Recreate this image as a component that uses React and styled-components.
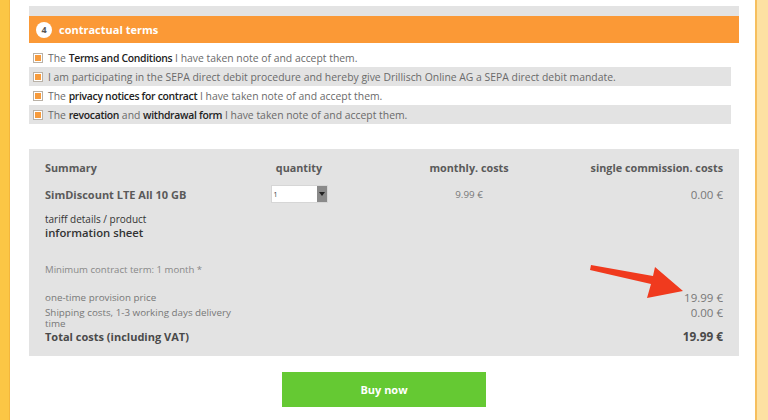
import styled, { createGlobalStyle } from 'styled-components';

const GlobalStyle = createGlobalStyle`
  html, body {
    margin: 0;
    padding: 0;
    background: #fff;
  }
  body {
    font-family: "Open Sans", "DejaVu Sans", sans-serif;
    color: #666;
  }
`;

const Page = styled.div`
  display: flex;
  width: 768px;
  height: 420px;
  overflow: hidden;
`;

const LeftRail = styled.div`
  width: 9px;
  background: #fbc645;
  border-right: 1px solid #f3b63c;
`;

const RightRail = styled.div`
  width: 11px;
  background: #fde1a2;
  border-left: 2px solid #f6bf5e;
`;

const Main = styled.div`
  flex: 1;
  padding: 6px 16px 0 19px;
`;

const TopBar = styled.div`
  height: 10px;
  background: #e3e3e3;
`;

const SectionHeader = styled.div`
  display: flex;
  align-items: center;
  gap: 7px;
  height: 27px;
  padding-left: 7px;
  background: #fb9936;
  color: #fff;
  font-size: 11px;
  font-weight: 700;
`;

const StepBadge = styled.span`
  display: flex;
  align-items: center;
  justify-content: center;
  width: 16px;
  height: 16px;
  border-radius: 50%;
  background: #fff;
  color: #555;
  font-size: 9px;
  font-weight: 700;
`;

const Terms = styled.div`
  margin-top: 5px;
  width: 702px;
`;

const TermRow = styled.label`
  display: flex;
  align-items: center;
  gap: 5px;
  height: 19px;
  padding-left: 4px;
  font-size: 10.4px;
  color: #6a6a6a;
  background: ${(props) => (props.shaded ? '#e3e3e3' : 'transparent')};
`;

const CheckBox = styled.span`
  box-sizing: border-box;
  width: 10px;
  height: 10px;
  border: 1px solid #b9b1a6;
  background: #fff;
  padding: 1px;
  display: flex;

  &::after {
    content: '';
    flex: 1;
    background: #f79b3c;
  }
`;

const Strong = styled.b`
  font-weight: 600;
  color: #222;
  letter-spacing: -0.3px;
`;

const Summary = styled.div`
  margin-top: 25px;
  background: #e3e3e3;
  padding: 11px 16px 14px 16px;
  font-size: 9.8px;
`;

const SummaryGrid = styled.div`
  display: grid;
  grid-template-columns: 184px 140px 200px 1fr;
  align-items: center;
  row-gap: 10px;
`;

const HeadCell = styled.div`
  font-weight: 700;
  font-size: 10.8px;
  color: #5a5a5a;
  text-align: ${(props) => props.align || 'left'};
`;

const Cell = styled.div`
  text-align: ${(props) => props.align || 'left'};
  color: #777;
  font-size: ${(props) => (props.big ? '11.5px' : '9.8px')};
`;

const ProductName = styled.div`
  font-weight: 700;
  font-size: 11px;
  color: #5a5a5a;
`;

const Select = styled.div`
  margin: 0 auto;
  display: flex;
  width: 57px;
  height: 18px;
  background: #fff;
  border: 1px solid #d6d6d6;
  box-sizing: border-box;
  font-size: 7px;
  color: #333;
`;

const SelectValue = styled.span`
  flex: 1;
  display: flex;
  align-items: center;
  padding-left: 2px;
`;

const SelectArrow = styled.span`
  width: 10px;
  background: #8a8a8a;
  display: flex;
  align-items: center;
  justify-content: center;

  &::after {
    content: '';
    border-left: 3px solid transparent;
    border-right: 3px solid transparent;
    border-top: 4px solid #222;
  }
`;

const Tariff = styled.div`
  margin-top: 10px;
  line-height: 13px;
  color: #333;
`;

const TariffTop = styled.div`
  font-size: 10px;
`;

const TariffBottom = styled.div`
  font-size: 11.3px;
  font-weight: 600;
`;

const MinTerm = styled.div`
  margin-top: 24px;
  color: #888;
  font-size: 9.6px;
`;

const Costs = styled.div`
  position: relative;
  margin-top: 16px;
  display: flex;
  flex-direction: column;
`;

const CostRow = styled.div`
  display: flex;
  justify-content: space-between;
  align-items: ${(props) => (props.top ? 'flex-start' : 'flex-end')};
  margin-top: ${(props) => props.gap || 0}px;
  line-height: 11px;
  font-size: ${(props) => (props.total ? '11px' : '9.8px')};
  font-weight: ${(props) => (props.total ? 700 : 400)};
  color: ${(props) => (props.total ? '#4a4a4a' : '#777')};
`;

const CostLabel = styled.span`
  width: 200px;
`;

const CostValue = styled.span`
  font-size: ${(props) => (props.total ? '11.8px' : '11.5px')};
`;

const Arrow = styled.svg`
  position: absolute;
  left: 544px;
  top: -29px;
`;

const ButtonBar = styled.div`
  display: flex;
  justify-content: center;
  margin-top: 16px;
`;

const BuyButton = styled.button`
  width: 204px;
  height: 35px;
  border: none;
  background: #65c933;
  color: #fff;
  font-family: "Open Sans", sans-serif;
  font-size: 11px;
  font-weight: 700;
  cursor: pointer;
`;

const terms = [
  <>The <Strong>Terms and Conditions</Strong> I have taken note of and accept them.</>,
  <>I am participating in the SEPA direct debit procedure and hereby give Drillisch Online AG a SEPA direct debit mandate.</>,
  <>The <Strong>privacy notices for contract</Strong> I have taken note of and accept them.</>,
  <>The <Strong>revocation</Strong> and <Strong>withdrawal form</Strong> I have taken note of and accept them.</>,
];

const App = () => {
  return (
    <Page>
      <GlobalStyle />
      <LeftRail />
      <Main>
        <TopBar />
        <SectionHeader>
          <StepBadge>4</StepBadge>
          contractual terms
        </SectionHeader>

        <Terms>
          {terms.map((t, i) => (
            <TermRow key={i} shaded={i % 2 === 1}>
              <CheckBox />
              <span>{t}</span>
            </TermRow>
          ))}
        </Terms>

        <Summary>
          <SummaryGrid>
            <HeadCell>Summary</HeadCell>
            <HeadCell align="center">quantity</HeadCell>
            <HeadCell align="center">monthly. costs</HeadCell>
            <HeadCell align="right">single commission. costs</HeadCell>

            <ProductName>SimDiscount LTE All 10 GB</ProductName>
            <Select>
              <SelectValue>1</SelectValue>
              <SelectArrow />
            </Select>
            <Cell align="center">9.99 €</Cell>
            <Cell align="right" big>0.00 €</Cell>
          </SummaryGrid>

          <Tariff>
            <TariffTop>tariff details / product</TariffTop>
            <TariffBottom>information sheet</TariffBottom>
          </Tariff>

          <MinTerm>Minimum contract term: 1 month *</MinTerm>

          <Costs>
            <Arrow width="100" height="40" viewBox="0 0 100 40">
              <polygon
                points="2,2 64,13 66,4 94,28 58,35 62,21 1,7"
                fill="#f03a1e"
              />
            </Arrow>
            <CostRow>
              <CostLabel>one-time provision price</CostLabel>
              <CostValue>19.99 €</CostValue>
            </CostRow>
            <CostRow top gap={4}>
              <CostLabel>Shipping costs, 1-3 working days delivery time</CostLabel>
              <CostValue>0.00 €</CostValue>
            </CostRow>
            <CostRow total gap={2}>
              <CostLabel>Total costs (including VAT)</CostLabel>
              <CostValue total>19.99 €</CostValue>
            </CostRow>
          </Costs>
        </Summary>

        <ButtonBar>
          <BuyButton>Buy now</BuyButton>
        </ButtonBar>
      </Main>
      <RightRail />
    </Page>
  );
};

export default App;
